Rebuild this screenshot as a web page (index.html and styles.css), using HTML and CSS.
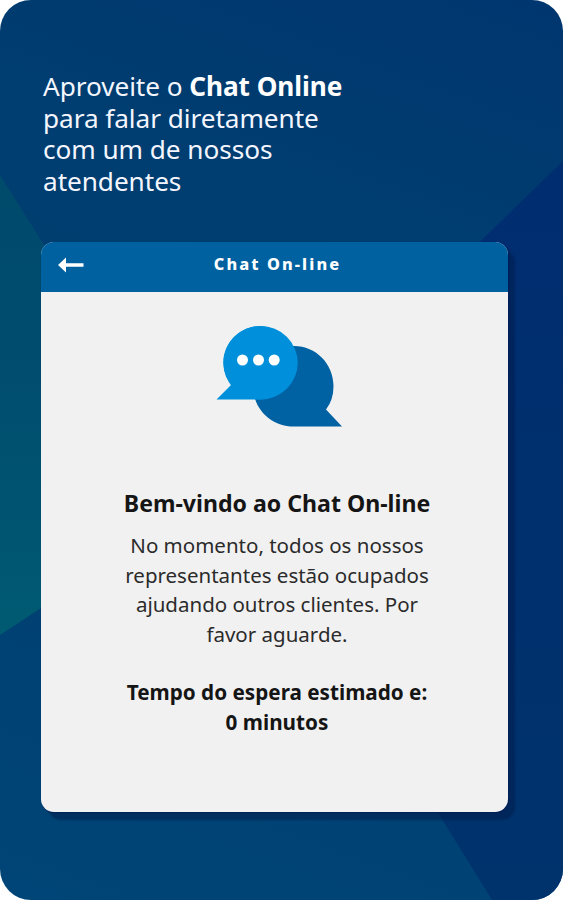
FILE: index.html
```html
<!DOCTYPE html>
<html lang="pt-BR">
<head>
<meta charset="utf-8">
<title>Chat On-line</title>
<link rel="stylesheet" href="styles.css">
</head>
<body>
<main class="promo">
  <svg class="backdrop" viewBox="0 0 563 900" aria-hidden="true">
    <defs>
      <linearGradient id="teal" x1="0" y1="0" x2="0" y2="1">
        <stop offset="0" stop-color="#004a6c"/>
        <stop offset="0.45" stop-color="#004d70"/>
        <stop offset="1" stop-color="#005b72"/>
      </linearGradient>
      <linearGradient id="navy" x1="0" y1="0" x2="0" y2="1">
        <stop offset="0" stop-color="#002d70"/>
        <stop offset="1" stop-color="#00336c"/>
      </linearGradient>
    </defs>
    <path fill="url(#teal)" d="M0 175 L120 366 V556 L0 635Z"/>
    <path fill="url(#navy)" d="M563 161 L300 416 V590 L492 900 H563Z"/>
  </svg>
  <h1 class="headline">Aproveite o <b>Chat Online</b><br>para falar diretamente<br>com um de nossos<br>atendentes</h1>
  <section class="card">
    <header class="bar">
      <svg class="back" viewBox="0 0 27 16" aria-hidden="true"><path fill="#fff" d="M0 8 L8 .5 V6.300 H25.500 V9.700 H8 V15.500Z"/></svg>
      <span class="bar-title">Chat On-line</span>
    </header>
    <div class="content">
      <svg class="bubbles" viewBox="0 0 128 104" aria-hidden="true">
        <path fill="#0061a3" d="M78 21 C100 21 117.500 39 117.500 61 Q117.500 75 110 84.500 L126 101.500 H78 C55 101.500 37 84 37 61 C37 39 55 21 78 21Z"/>
        <path fill="#0090db" d="M44.500 1 A37 36.800 0 0 1 44.500 74.500 H.5 L15 60 C10 53 7.500 45 7.500 37.500 C7.500 17.500 24 1 44.500 1Z"/>
        <ellipse fill="#0090db" cx="44.500" cy="37.750" rx="37.200" ry="36.750"/>
        <g fill="#fff"><circle cx="26.500" cy="35" r="5.500"/><circle cx="42.500" cy="35" r="5.500"/><circle cx="58.200" cy="35" r="5.500"/></g>
      </svg>
      <h2 class="welcome">Bem-vindo ao Chat On-line</h2>
      <p class="message">No momento, todos os nossos<br>representantes estão ocupados<br>ajudando outros clientes. Por<br>favor aguarde.</p>
      <p class="wait">Tempo do espera estimado e:<br>0 minutos</p>
    </div>
  </section>
</main>
</body>
</html>
```
FILE: styles.css
```css
* { box-sizing: border-box; }
body { margin: 0; background: #fff; font-family: "Noto Sans", sans-serif; }
h1, h2, p { margin: 0; }
.promo {
  position: relative;
  width: 563px;
  height: 900px;
  padding: 71px 41px 0;
  overflow: hidden;
  border-radius: 31px;
  background: linear-gradient(200deg, #00366f 0%, #003d70 25%, #003f70 60%, #004577 100%);
}
.backdrop { position: absolute; inset: 0; width: 100%; height: 100%; }
.headline {
  position: relative;
  height: 171px;
  padding-left: 2px;
  color: #f4f6ff;
  font-size: 26.2px;
  font-weight: 400;
  line-height: 31.7px;
  letter-spacing: -.06px;
  white-space: nowrap;
}
.headline b { font-weight: 700; color: #fff; }
.card {
  position: relative;
  width: 467px;
  height: 570px;
  border-radius: 13px;
  background: #f1f1f1;
  box-shadow: 7px 8px 2px rgba(0, 28, 76, .5), 1px 1px 2px rgba(0, 20, 80, .6);
}
.bar {
  display: grid;
  grid-template-columns: 60px 1fr 60px;
  height: 50px;
  padding-top: 10px;
  border-radius: 13px 13px 0 0;
  background: #0061a1;
}
.back { width: 27px; height: 16px; margin: 5px 0 0 17px; }
.bar-title {
  padding-left: 6px;
  color: #fff;
  font-size: 16.3px;
  font-weight: 800;
  line-height: 24px;
  letter-spacing: 2.1px;
  text-align: center;
  white-space: nowrap;
}
.content {
  display: flex;
  flex-direction: column;
  align-items: center;
  padding: 33px 0 0 5px;
  color: #151515;
  text-align: center;
  white-space: nowrap;
}
.bubbles { width: 128px; height: 104px; margin-left: 6px; }
.welcome { margin-top: 58px; font-size: 23.1px; line-height: 32px; }
.message { margin-top: 12px; color: #2b2b2b; font-size: 20.5px; line-height: 29.7px; }
.wait { margin-top: 28px; font-size: 20.7px; font-weight: 700; line-height: 29.7px; }
```
